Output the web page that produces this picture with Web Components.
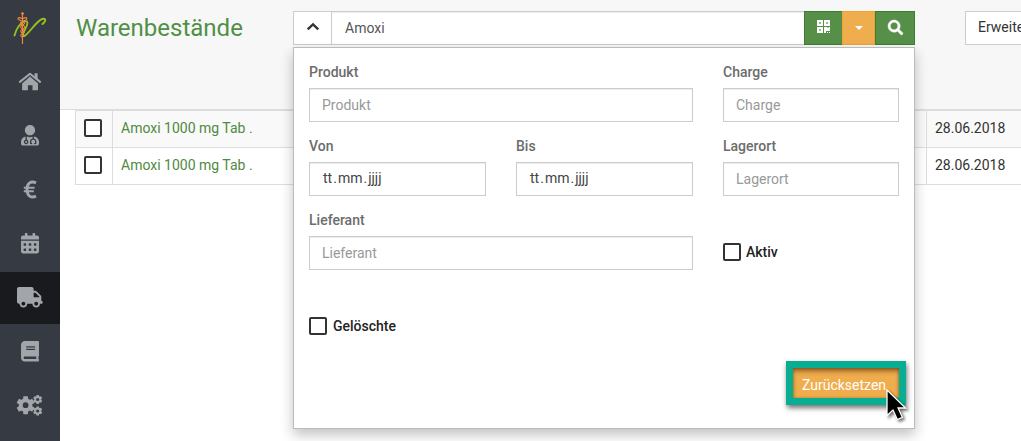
<!DOCTYPE html>
<html lang="de">
<head>
<meta charset="utf-8">
<title>Warenbestände</title>
<style>
html,body{margin:0;height:100%;overflow:hidden;background:#fff}
body{font:14px/20px Roboto,"Noto Sans",sans-serif;color:#333}
</style>
</head>
<body>
<stock-app></stock-app>
<script>
const define=(name,html)=>customElements.define(name,class extends HTMLElement{
  constructor(){super();this.attachShadow({mode:'open'}).innerHTML='<style>:host{box-sizing:border-box}*{box-sizing:border-box}</style>'+html;}
});

const gear=(cx,cy,r,hole,w,t)=>{
  let s=`<circle cx="${cx}" cy="${cy}" r="${(r*.76+hole)/2}" fill="none" stroke-width="${r*.76-hole}" stroke="currentColor"/>`;
  for(let i=0;i<6;i++)s+=`<rect x="${cx-w/2}" y="${cy-r}" width="${w}" height="${t}" rx=".7" transform="rotate(${i*60} ${cx} ${cy})"/>`;
  return s;
};
const calendarHoles=[[64,256],[192,256],[320,256],[64,384],[192,384],[320,384]].map(([x,y])=>`M${x+12} ${y}h40q12 0 12 12v40q0 12-12 12h-40q-12 0-12-12v-40q0-12 12-12z`).join('');
const icons={
 home:['0 0 24 20.5',24,20.5,'<path d="M12 5.6 20 12.4v6.2q0 .6-.6.6h-4.9v-5h-4.6v5H4.7q-.6 0-.6-.6v-6.2z"/><path d="M1.9 10.9 12 2.8l10.1 8.1" fill="none" stroke="currentColor" stroke-width="2.1" stroke-linecap="round" stroke-linejoin="round"/><path d="M16.6 2.3h3v6l-3-2.4z"/>'],
 doctor:['0 0 448 512',18,20.5,'<path d="M224 256c70.7 0 128-57.3 128-128S294.7 0 224 0 96 57.3 96 128s57.3 128 128 128zM104 424c0 13.3 10.7 24 24 24s24-10.7 24-24-10.7-24-24-24-24 10.7-24 24zm216-135.4v49c36.5 7.4 64 39.8 64 78.4v41.7c0 7.6-5.4 14.2-12.9 15.7l-32.2 6.4c-4.3.9-8.5-1.9-9.4-6.3l-3.1-15.7c-.9-4.3 1.9-8.6 6.3-9.4l19.3-3.9V416c0-62.8-96-65.1-96 1.9v26.7l19.3 3.9c4.3.9 7.1 5.1 6.3 9.4l-3.1 15.7c-.9 4.3-5.1 7.1-9.4 6.3l-31.2-4.2c-7.9-1.1-13.8-7.8-13.8-15.9V416c0-38.6 27.5-70.9 64-78.4v-45.2c-2.2.7-4.4 1.1-6.6 1.9-18 6.3-37.3 9.8-57.4 9.8s-39.4-3.5-57.4-9.8c-7.4-2.6-14.9-4.2-22.6-5.2v81.6c23.1 6.9 40 28.1 40 53.4 0 30.9-25.1 56-56 56s-56-25.1-56-56c0-25.3 16.9-46.5 40-53.4v-80.4C48.500 301 0 355.800 0 422.400v44.800C0 491.900 20.100 512 44.800 512h358.400c24.700 0 44.800-20.100 44.800-44.800v-44.800c0-72-56.800-130.300-128-133.800z"/>'],
 euro:['0 0 14 20.5',14,20.5,'<path d="M13 3.900C8 1.400 4 4.200 4 10.500s4 9 9 6.600" fill="none" stroke="currentColor" stroke-width="2.900"/><path d="M.8 8.800h10.800M.8 12.300h10" fill="none" stroke="currentColor" stroke-width="2.100"/>'],
 calendar:['0 0 448 512',18,20.5,'<path fill-rule="evenodd" d="M0 464c0 26.500 21.500 48 48 48h352c26.500 0 48-21.500 48-48V192H0z'+calendarHoles+'"/><path d="M448 112v48H0v-48c0-26.500 21.500-48 48-48h48V12q0-12 12-12h40q12 0 12 12v52h128V12q0-12 12-12h40q12 0 12 12v52h48c26.500 0 48 21.500 48 48z"/>'],
 truck:['0 0 640 512',25.6,20.5,'<path d="M624 352h-16V243.900c0-12.700-5.100-24.900-14.100-33.900L494 110.100c-9-9-21.200-14.100-33.900-14.100H416V48c0-26.500-21.500-48-48-48H48C21.500 0 0 21.500 0 48v320c0 26.500 21.500 48 48 48h16c0 53 43 96 96 96s96-43 96-96h128c0 53 43 96 96 96s96-43 96-96h48c8.800 0 16-7.200 16-16v-32c0-8.800-7.200-16-16-16zM160 464c-26.500 0-48-21.500-48-48s21.500-48 48-48 48 21.500 48 48-21.500 48-48 48zm320 0c-26.500 0-48-21.500-48-48s21.500-48 48-48 48 21.500 48 48-21.500 48-48 48zm80-208H416V144h44.100l99.900 99.900V256z"/>'],
 book:['0 0 448 512',18,20.5,'<path d="M448 360V24c0-13.300-10.700-24-24-24H96C43 0 0 43 0 96v320c0 53 43 96 96 96h328c13.300 0 24-10.700 24-24v-16c0-7.500-3.500-14.300-8.900-18.700-4.200-15.400-4.200-59.300 0-74.700 5.400-4.300 8.900-11.100 8.900-18.600zM128 134c0-3.300 2.700-6 6-6h212c3.300 0 6 2.700 6 6v20c0 3.300-2.700 6-6 6H134c-3.300 0-6-2.700-6-6v-20zm0 64c0-3.300 2.700-6 6-6h212c3.300 0 6 2.700 6 6v20c0 3.300-2.700 6-6 6H134c-3.300 0-6-2.700-6-6v-20zm253.400 250H96c-17.700 0-32-14.300-32-32 0-17.600 14.400-32 32-32h285.400c-1.900 17.100-1.900 46.900 0 64z"/>'],
 cogs:['0 0 25.6 20.5',25.6,20.5,gear(8.6,10.2,9,2.9,4.8,4)+gear(20.7,4.5,4.6,1.6,2.7,2)+gear(20.7,16,4.6,1.6,2.7,2)],
 up:['0 0 14 9',14,9,'<path d="M1.700 7.300 7 2.300l5.300 5" fill="none" stroke="currentColor" stroke-width="2.300"/>'],
 down:['0 0 8 4',8,4,'<path d="M0 0h8L4 4z"/>'],
 qr:['0 0 13 13',13,13,'<path fill-rule="evenodd" d="M0 0h6v6H0zM2.200 2.200v1.600h1.600V2.200zM7 0h6v6H7zM9.200 2.200v1.600h1.600V2.200zM0 7h6v6H0zM2.200 9.200v1.600h1.600V9.200zM7 7h3.500v1H11.500V7H13v4H9V13H7zM10 12h1v1h-1zM12 12h1v1h-1z"/>'],
 search:['0 0 512 512',15,15,'<path stroke="currentColor" stroke-width="14" d="M505 442.700L405.300 343c-4.500-4.500-10.600-7-17-7H372c27.600-35.300 44-79.700 44-128C416 93.100 322.900 0 208 0S0 93.100 0 208s93.100 208 208 208c48.300 0 92.700-16.400 128-44v16.300c0 6.400 2.500 12.500 7 17l99.700 99.700c9.400 9.400 24.600 9.400 33.900 0l28.300-28.300c9.400-9.400 9.400-24.600.1-34zM208 336c-70.700 0-128-57.200-128-128 0-70.700 57.200-128 128-128 70.700 0 128 57.200 128 128 0 70.700-57.200 128-128 128z"/>']
};
customElements.define('ui-icon',class extends HTMLElement{
  constructor(){super();this.attachShadow({mode:'open'});}
  connectedCallback(){
    const [box,w,h,body]=icons[this.getAttribute('name')];
    this.shadowRoot.innerHTML=`<style>:host{display:block;flex:none}svg{display:block;overflow:visible}</style><svg viewBox="${box}" width="${w}" height="${h}" fill="currentColor">${body}</svg>`;
  }
});

define('nav-item',`<style>
:host{display:flex;height:52px;padding-bottom:2px;align-items:center;justify-content:center;color:#a2a6aa}
:host([active]){background:#191a1e}
</style><slot></slot>`);

define('side-bar',`<style>
:host{display:flex;flex-direction:column;width:60px;height:100%;background:#363a42}
.logo{height:56px}
nav{display:flex;flex-direction:column;gap:2px}
svg{display:block}
</style>
<div class="logo"><svg width="60" height="56" fill="none" stroke-linecap="round">
<path d="M14.500 35.500C16 30 19 24 24 21.500C28.500 20 28 24 25.500 28.500C23.500 32 21.500 37 24.500 36C29.500 33 36 21.500 42 19C45.500 18 46 20.500 44.500 22L42.500 24" stroke="#97bf1e" stroke-width="1.900"/>
<path d="M22.500 13v30.500" stroke="#ee8640" stroke-width="1.200"/><circle cx="22.500" cy="13.500" r="1.100" fill="#ee8640" stroke="#ee8640" stroke-width=".6"/>
<path d="M21.800 18.500c-4.500-2.500-5 1-1.500 2s6 2.500 3 4-4 3-1 4.500 3 3 0 4.500-1 3 .2 4M23.200 18.500c4-2.500 5 1 1.500 2s-6 2.500-3 4 4.500 3 1.300 4.500-3 3 0 4.500" stroke="#ee8640" stroke-width="1.100"/>
</svg></div>
<nav>
<nav-item><ui-icon name="home"></ui-icon></nav-item>
<nav-item><ui-icon name="doctor"></ui-icon></nav-item>
<nav-item><ui-icon name="euro"></ui-icon></nav-item>
<nav-item><ui-icon name="calendar"></ui-icon></nav-item>
<nav-item active><ui-icon name="truck"></ui-icon></nav-item>
<nav-item><ui-icon name="book"></ui-icon></nav-item>
<nav-item><ui-icon name="cogs"></ui-icon></nav-item>
</nav>`);

define('check-box',`<style>
:host{display:flex;align-items:center;gap:5px;font-weight:500;color:#222}
i{display:block;flex:none;width:18px;height:18px;border:2px solid #333;border-radius:2px;background:#fff}
</style><i></i><slot></slot>`);

define('text-field',`<style>
:host{display:block}
label{display:block;height:20px;margin-bottom:6px;font-weight:500;color:#6c6c6c}
div{height:34px;padding:6px 12px;border:1px solid #ccc;background:#fff;color:#999;box-shadow:inset 0 1px 1px rgba(0,0,0,.075)}
:host([date]) div{color:#444;padding-top:5px;padding-left:13px}
::slotted(b){font-weight:400;padding:0 1px}
</style><label><slot name="label"></slot></label><div><slot></slot></div>`);

define('search-bar',`<style>
:host{display:flex;width:622px;height:34px}
span{display:flex;align-items:center;justify-content:center;border:1px solid #ccc;background:#fff;color:#333}
.toggle{width:39px;margin-right:-1px;padding-bottom:3px}
.value{flex:1;justify-content:flex-start;padding-left:13px;color:#555;border-right:0;box-shadow:inset 0 1px 1px rgba(0,0,0,.075)}
.qr,.go{background:#569048;border-color:#3e7d2e;color:#fff}
.qr{width:38px;border-right:0;padding-bottom:3px}.go{width:40px;padding-bottom:2px}
.menu{width:33px;background:#f0ad4e;border-color:#eea236;color:#fff}
</style>
<span class="toggle"><ui-icon name="up"></ui-icon></span><span class="value">Amoxi</span><span class="qr"><ui-icon name="qr"></ui-icon></span><span class="menu"><ui-icon name="down"></ui-icon></span><span class="go"><ui-icon name="search"></ui-icon></span>`);

define('reset-button',`<style>
:host{display:block;position:relative;width:106px;height:30px;padding:7px 9px 3px;background:#f0ad4e;color:#fff;box-shadow:inset 0 4px 5px -1px rgba(80,40,0,.6),inset 0 0 3px rgba(90,50,0,.4),0 0 0 7px #08ae92,1px 3px 5px 7px rgba(0,0,0,.55)}
svg{position:absolute;left:92px;top:20px;overflow:visible;filter:drop-shadow(2px 2px 1.500px rgba(0,0,0,.55))}
</style><slot></slot><svg width="22" height="34"><path d="M2 2v25.500l6-5.500 4.300 9.500 5-2.200-4.200-9.300h7.500z" fill="#000" stroke="#fff" stroke-width="1.300"/></svg>`);

define('search-panel',`<style>
:host{display:flex;flex-direction:column;width:622px;height:382px;padding:14px 15px;background:#fff;border:1px solid #bbb;box-shadow:0 6px 12px rgba(0,0,0,.24)}
.grid{display:grid;grid-template-columns:177px 177px 176px;grid-auto-rows:60px;gap:14px 30px}
.wide{grid-column:span 2}
.check{align-self:end;height:34px;padding-bottom:2px}
.deleted{gap:6px}
footer{display:flex;justify-content:flex-end;margin-top:auto;padding-bottom:16px}
</style>
<div class="grid">
<text-field class="wide"><span slot="label">Produkt</span>Produkt</text-field>
<text-field><span slot="label">Charge</span>Charge</text-field>
<text-field date><span slot="label">Von</span>tt<b>.</b>mm<b>.</b>jjjj</text-field>
<text-field date><span slot="label">Bis</span>tt<b>.</b>mm<b>.</b>jjjj</text-field>
<text-field><span slot="label">Lagerort</span>Lagerort</text-field>
<text-field class="wide"><span slot="label">Lieferant</span>Lieferant</text-field>
<check-box class="check">Aktiv</check-box>
<check-box class="check deleted">Gelöschte</check-box>
</div>
<footer><reset-button>Zurücksetzen</reset-button></footer>`);

define('stock-row',`<style>
:host{display:grid;grid-template-columns:36px 814px 1fr;height:37px;border-bottom:1px solid #ddd;border-left:1px solid #ddd}
:host([odd]){background:#f9f9f9}
.cell{padding:7px 8px;border-left:1px solid #ddd}
.select{padding:8px}
.name{color:#4f8a41}
</style><div class="select"><check-box></check-box></div><div class="cell name"><slot></slot></div><div class="cell"><slot name="date"></slot></div>`);

define('stock-app',`<style>
:host{display:grid;grid-template-columns:60px 1fr;height:441px;overflow:hidden}
main{min-width:0;overflow:hidden}
header{display:flex;height:110px;padding:11px 0 0 16px;background:#f7f7f7;border-bottom:1px solid #ddd}
h1{width:217px;flex:none;margin:0;font-size:24px;line-height:34px;font-weight:400;color:#4f9045;white-space:nowrap}
.search{position:relative;flex:none;width:622px}
search-panel{position:absolute;left:0;top:36px;z-index:2}
.more{flex:none;width:90px;height:34px;margin-left:50px;padding:6px 12px;line-height:19px;border:1px solid #ccc;background:#fff;color:#333}
.table{margin-left:15px;border-top:1px solid #ddd}
</style>
<side-bar></side-bar>
<main>
<header><h1>Warenbestände</h1><div class="search"><search-bar></search-bar><search-panel></search-panel></div><div class="more">Erweite</div></header>
<div class="table">
<stock-row odd>Amoxi 1000 mg Tab .<span slot="date">28.06.2018</span></stock-row>
<stock-row>Amoxi 1000 mg Tab .<span slot="date">28.06.2018</span></stock-row>
</div>
</main>`);
</script>
</body>
</html>
